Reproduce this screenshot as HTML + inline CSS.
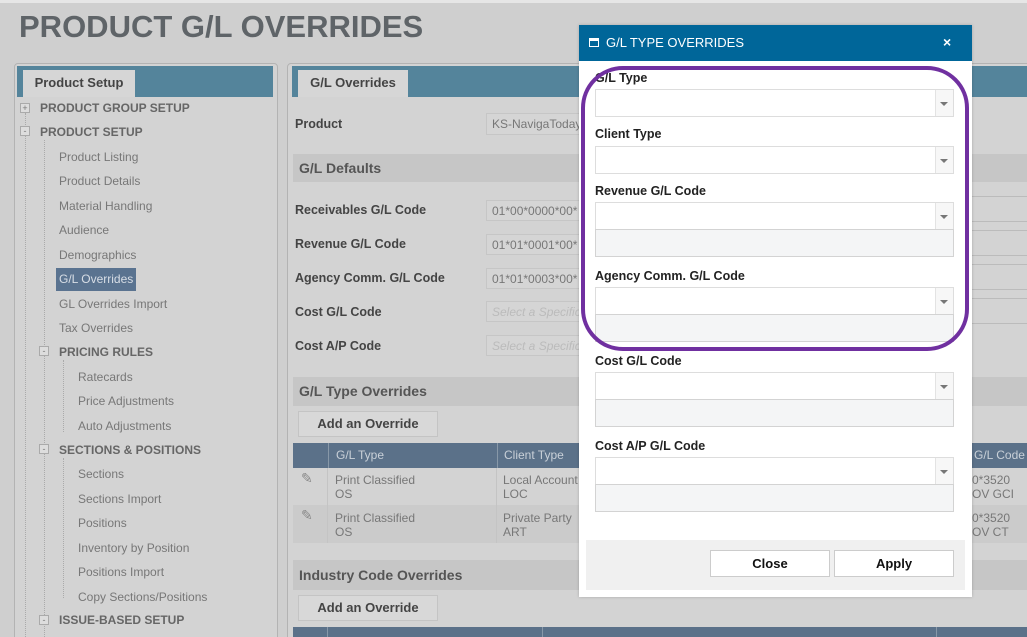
<!DOCTYPE html>
<html><head><meta charset="utf-8"><style>
*{box-sizing:border-box;margin:0;padding:0}
html,body{width:1027px;height:637px;overflow:hidden}
body{background:#cfcfcf;font-family:"Liberation Sans",sans-serif;position:relative;color:#555}
.a{position:absolute}
.title{left:19px;top:9px;font-size:31px;font-weight:bold;color:#5f6468;letter-spacing:0}
.panel{border:1px solid #b3b3b3;border-radius:4px;background:#d3d3d3}
.bar{background:#54849b}
.tab{background:#d6d6d6;font-weight:bold;font-size:13px;color:#444;text-align:center;line-height:26px}
.tr{font-size:12px;color:#777}
.trb{font-size:12px;font-weight:bold;color:#666}
.lab{font-size:12.5px;font-weight:bold;color:#444}
.inp{background:#d5d5d5;border:1px solid #c6c6c6;font-size:12px;color:#777;padding-left:5px;line-height:20px;overflow:hidden;white-space:nowrap}
.band{background:#c6c6c6;font-weight:bold;font-size:14px;color:#555;padding-left:6px}
.btn{background:#d8d8d8;border:1px solid #c4c4c4;font-weight:bold;font-size:13px;color:#444;text-align:center;line-height:24px}
.th{background:#5b7189;color:#c9d0d8;font-size:12px;line-height:25px}
.td{font-size:12px;color:#777;line-height:14px}
.mlab{font-size:12.5px;font-weight:bold;color:#222}
.sel{background:#fff;border:1px solid #ddd;height:28px}
.sel:after{content:"";position:absolute;right:0;top:0;width:17px;height:26px;border-left:1px solid #e3e3e3;background:#f7f7f7}
.arr{position:absolute;right:5px;top:12px;width:0;height:0;border-left:4px solid transparent;border-right:4px solid transparent;border-top:4px solid #777;z-index:2}
.gray{background:#f4f5f6;border:1px solid #d3d3d3;height:28px}
.mbtn{background:#fff;border:1px solid #ccc;font-weight:bold;font-size:13px;color:#111;text-align:center;line-height:25px}
.dot{border-left:1px dotted #aaa}
.box{width:10px;height:10px;border:1px solid #aaa;background:#ddd;font-size:9px;line-height:8px;text-align:center;color:#777}
</style></head><body>
<div class="a" style="left:0;top:0;width:1027px;height:3px;background:#e6e6e6"></div>
<div class="a title">PRODUCT G/L OVERRIDES</div>

<div class="a panel" style="left:14px;top:63px;width:264px;height:580px"></div>
<div class="a bar" style="left:17px;top:66px;width:256px;height:31px"></div>
<div class="a tab" style="left:23px;top:70px;width:112px;height:27px">Product Setup</div>
<div class="a dot" style="left:25px;top:113px;height:524px"></div>
<div class="a dot" style="left:44px;top:140px;height:497px"></div>
<div class="a dot" style="left:63px;top:360px;height:72px"></div>
<div class="a dot" style="left:63px;top:458px;height:140px"></div>
<div class="a box" style="left:20px;top:103px">+</div>
<div class="a box" style="left:20px;top:126px">-</div>
<div class="a trb" style="left:40px;top:101px">PRODUCT GROUP SETUP</div>
<div class="a trb" style="left:40px;top:125px">PRODUCT SETUP</div>
<div class="a tr" style="left:59px;top:150px">Product Listing</div>
<div class="a tr" style="left:59px;top:174px">Product Details</div>
<div class="a tr" style="left:59px;top:199px">Material Handling</div>
<div class="a tr" style="left:59px;top:223px">Audience</div>
<div class="a tr" style="left:59px;top:248px">Demographics</div>
<div class="a" style="left:56px;top:268px;width:80px;height:23px;background:#5a7390"></div>
<div class="a tr" style="left:59px;top:272px;color:#d8dee6">G/L Overrides</div>
<div class="a tr" style="left:59px;top:297px">GL Overrides Import</div>
<div class="a tr" style="left:59px;top:321px">Tax Overrides</div>
<div class="a box" style="left:39px;top:346px">-</div>
<div class="a trb" style="left:59px;top:345px">PRICING RULES</div>
<div class="a tr" style="left:78px;top:370px">Ratecards</div>
<div class="a tr" style="left:78px;top:394px">Price Adjustments</div>
<div class="a tr" style="left:78px;top:419px">Auto Adjustments</div>
<div class="a box" style="left:39px;top:444px">-</div>
<div class="a trb" style="left:59px;top:443px">SECTIONS &amp; POSITIONS</div>
<div class="a tr" style="left:78px;top:467px">Sections</div>
<div class="a tr" style="left:78px;top:492px">Sections Import</div>
<div class="a tr" style="left:78px;top:516px">Positions</div>
<div class="a tr" style="left:78px;top:541px">Inventory by Position</div>
<div class="a tr" style="left:78px;top:565px">Positions Import</div>
<div class="a tr" style="left:78px;top:590px">Copy Sections/Positions</div>
<div class="a box" style="left:39px;top:615px">-</div>
<div class="a trb" style="left:59px;top:613px">ISSUE-BASED SETUP</div>

<div class="a panel" style="left:287px;top:63px;width:760px;height:580px"></div>
<div class="a bar" style="left:292px;top:66px;width:740px;height:31px"></div>
<div class="a tab" style="left:298px;top:70px;width:110px;height:27px">G/L Overrides</div>
<div class="a lab" style="left:295px;top:117px">Product</div>
<div class="a inp" style="left:486px;top:113px;width:110px;height:22px">KS-NavigaToday</div>
<div class="a band" style="left:293px;top:154px;width:740px;height:28px;line-height:28px">G/L Defaults</div>
<div class="a lab" style="left:295px;top:203px">Receivables G/L Code</div>
<div class="a lab" style="left:295px;top:237px">Revenue G/L Code</div>
<div class="a lab" style="left:295px;top:271px">Agency Comm. G/L Code</div>
<div class="a lab" style="left:295px;top:305px">Cost G/L Code</div>
<div class="a lab" style="left:295px;top:339px">Cost A/P Code</div>
<div class="a inp" style="left:486px;top:200px;width:110px;height:21px">01*00*0000*00*</div>
<div class="a inp" style="left:486px;top:234px;width:110px;height:21px">01*01*0001*00*</div>
<div class="a inp" style="left:486px;top:268px;width:110px;height:21px">01*01*0003*00*</div>
<div class="a inp" style="left:486px;top:301px;width:110px;height:21px;font-style:italic;color:#bbb">Select a Specific</div>
<div class="a inp" style="left:486px;top:335px;width:110px;height:21px;font-style:italic;color:#bbb">Select a Specific</div>
<div class="a" style="left:972px;top:196px;width:60px;height:26px;border-top:1px solid #bbb;border-bottom:1px solid #bbb"></div>
<div class="a" style="left:972px;top:230px;width:60px;height:26px;border-top:1px solid #bbb;border-bottom:1px solid #bbb"></div>
<div class="a" style="left:972px;top:264px;width:60px;height:26px;border-top:1px solid #bbb;border-bottom:1px solid #bbb"></div>
<div class="a" style="left:972px;top:298px;width:60px;height:26px;border-top:1px solid #bbb;border-bottom:1px solid #bbb"></div>
<div class="a band" style="left:293px;top:377px;width:740px;height:29px;line-height:29px">G/L Type Overrides</div>
<div class="a btn" style="left:298px;top:411px;width:140px;height:26px">Add an Override</div>
<div class="a th" style="left:293px;top:443px;width:740px;height:25px"></div>
<div class="a th" style="left:328px;top:443px;padding-left:7px;border-left:1px solid #8898a8;width:169px">G/L Type</div>
<div class="a th" style="left:497px;top:443px;padding-left:6px;border-left:1px solid #8898a8;width:90px">Client Type</div>
<div class="a th" style="left:972px;top:443px;padding-left:2px">G/L Code</div>
<div class="a" style="left:293px;top:468px;width:740px;height:37px;background:#d3d3d3"></div>
<div class="a" style="left:293px;top:505px;width:740px;height:38px;background:#cbcbcb"></div>
<div class="a" style="left:327px;top:468px;width:1px;height:75px;background:#c4c4c4"></div>
<div class="a" style="left:496px;top:468px;width:1px;height:75px;background:#c4c4c4"></div>
<div class="a" style="left:301px;top:470px;font-size:14px;color:#888">✎</div>
<div class="a" style="left:301px;top:507px;font-size:14px;color:#888">✎</div>
<div class="a td" style="left:335px;top:473px">Print Classified<br>OS</div>
<div class="a td" style="left:335px;top:511px">Print Classified<br>OS</div>
<div class="a td" style="left:503px;top:473px">Local Account<br>LOC</div>
<div class="a td" style="left:503px;top:511px">Private Party<br>ART</div>
<div class="a td" style="left:972px;top:473px">0*3520<br>OV GCI</div>
<div class="a td" style="left:972px;top:511px">0*3520<br>OV CT</div>
<div class="a band" style="left:293px;top:560px;width:740px;height:30px;line-height:30px">Industry Code Overrides</div>
<div class="a btn" style="left:298px;top:595px;width:140px;height:26px">Add an Override</div>
<div class="a th" style="left:293px;top:627px;width:740px;height:12px"></div>
<div class="a" style="left:327px;top:627px;width:1px;height:12px;background:#8898a8"></div>
<div class="a" style="left:542px;top:627px;width:1px;height:12px;background:#8898a8"></div>
<div class="a" style="left:936px;top:627px;width:1px;height:12px;background:#8898a8"></div>

<div class="a" style="left:579px;top:25px;width:393px;height:572px;background:#fff;box-shadow:0 0 3px rgba(0,0,0,.2)"></div>
<div class="a" style="left:579px;top:25px;width:393px;height:36px;background:#006699"></div>
<div class="a" style="left:589px;top:38px;width:10px;height:9px;border:1.5px solid #fff;border-top-width:3px"></div>
<div class="a" style="left:606px;top:35px;font-size:13px;color:#fff">G/L TYPE OVERRIDES</div>
<div class="a" style="left:943px;top:34px;font-size:14px;color:#fff;font-weight:bold">×</div>

<div class="a mlab" style="left:595px;top:71px">G/L Type</div>
<div class="a sel" style="left:595px;top:89px;width:359px"><span class="arr"></span></div>
<div class="a mlab" style="left:595px;top:127px">Client Type</div>
<div class="a sel" style="left:595px;top:146px;width:359px"><span class="arr"></span></div>
<div class="a mlab" style="left:595px;top:184px">Revenue G/L Code</div>
<div class="a sel" style="left:595px;top:202px;width:359px"><span class="arr"></span></div>
<div class="a gray" style="left:595px;top:229px;width:359px"></div>
<div class="a mlab" style="left:595px;top:269px">Agency Comm. G/L Code</div>
<div class="a sel" style="left:595px;top:287px;width:359px"><span class="arr"></span></div>
<div class="a gray" style="left:595px;top:314px;width:359px"></div>
<div class="a mlab" style="left:595px;top:354px">Cost G/L Code</div>
<div class="a sel" style="left:595px;top:372px;width:359px"><span class="arr"></span></div>
<div class="a gray" style="left:595px;top:399px;width:359px"></div>
<div class="a mlab" style="left:595px;top:439px">Cost A/P G/L Code</div>
<div class="a sel" style="left:595px;top:457px;width:359px"><span class="arr"></span></div>
<div class="a gray" style="left:595px;top:484px;width:359px"></div>
<div class="a" style="left:586px;top:540px;width:379px;height:50px;background:#f0f0f0"></div>
<div class="a mbtn" style="left:710px;top:550px;width:120px;height:27px">Close</div>
<div class="a mbtn" style="left:834px;top:550px;width:120px;height:27px">Apply</div>

<div class="a" style="left:581px;top:66px;width:388px;height:285px;border:4px solid #7030a0;border-radius:42px"></div>
</body></html>
